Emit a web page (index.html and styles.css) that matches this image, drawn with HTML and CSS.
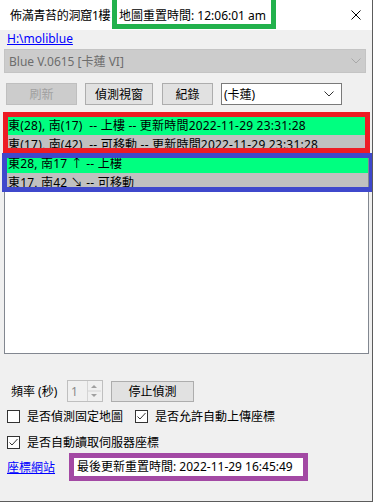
FILE: index.html
```html
<!DOCTYPE html>
<html>
<head lang="zh-Hant">
    <meta charset="UTF-8">
    <title>佈滿青苔的洞窟1樓</title>
    <link rel="stylesheet" href="styles.css">
</head>
<body>
<div class="window">
    <div class="titlebar">
        <span class="title">佈滿青苔的洞窟1樓</span>
        <span class="reset-time">地圖重置時間: 12:06:01 am</span>
        <svg class="close" width="10" height="10" viewBox="0 0 10 10">
            <path d="M0.5 0.5 L9.5 9.5 M9.5 0.5 L0.5 9.5" stroke="#000" stroke-width="1" fill="none"/>
        </svg>
    </div>
    <div class="content">
        <a class="path-link" href="#">H:\moliblue</a>
        <div class="combo combo-disabled">
            <span>Blue V.0615 [卡蓮 VI]</span>
            <svg width="10" height="6" viewBox="0 0 10 6"><path d="M0.5 0.5 L5 5 L9.5 0.5" stroke="#a8a8a8" fill="none"/></svg>
        </div>
        <div class="toolbar">
            <div class="btn btn-disabled btn-refresh">刷新</div>
            <div class="btn btn-detect">偵測視窗</div>
            <div class="btn btn-log">紀錄</div>
            <div class="combo combo-char">
                <span>(卡蓮)</span>
                <svg width="10" height="6" viewBox="0 0 10 6"><path d="M0.5 0.5 L5 5 L9.5 0.5" stroke="#333" fill="none"/></svg>
            </div>
        </div>
        <div class="listbox">
            <div class="row row-up">東(28), 南(17)  -- 上樓 -- 更新時間2022-11-29 23:31:28</div>
            <div class="row row-idle">東(17), 南(42)  -- 可移動 -- 更新時間2022-11-29 23:31:28</div>
            <div class="row row-up">東28, 南17 ↑ -- 上樓</div>
            <div class="row row-idle">東17, 南42 ↘ -- 可移動</div>
            <div class="mark mark-red"></div>
            <div class="mark mark-blue"></div>
        </div>
        <div class="freq-row">
            <span class="freq-label">頻率 (秒)</span>
            <div class="spin">
                <span class="spin-value">1</span>
                <svg class="spin-arrows" width="14" height="20" viewBox="0 0 14 20">
                    <path d="M0.5 0 V20 M0.5 10 H14" stroke="#d4d4d4" fill="none"/>
                    <path d="M4 7 L7 4 L10 7 Z" fill="#a0a0a0"/>
                    <path d="M4 13 L7 16 L10 13 Z" fill="#a0a0a0"/>
                </svg>
            </div>
            <div class="btn btn-stop">停止偵測</div>
        </div>
        <div class="check-row">
            <label class="check-item check-fixed">
                <span class="box"></span>
                <span>是否偵測固定地圖</span>
            </label>
            <label class="check-item">
                <span class="box"><svg width="11" height="11" viewBox="0 0 11 11"><path d="M1.5 5.5 L4 8 L9.5 2" stroke="#333" stroke-width="1" fill="none"/></svg></span>
                <span>是否允許自動上傳座標</span>
            </label>
        </div>
        <div class="check-row check-row-2">
            <label class="check-item">
                <span class="box"><svg width="11" height="11" viewBox="0 0 11 11"><path d="M1.5 5.5 L4 8 L9.5 2" stroke="#333" stroke-width="1" fill="none"/></svg></span>
                <span>是否自動讀取伺服器座標</span>
            </label>
        </div>
        <div class="footer">
            <a class="site-link" href="#">座標網站</a>
            <span class="last-update">最後更新重置時間: 2022-11-29 16:45:49</span>
        </div>
    </div>
</div>
</body>
</html>
```

FILE: styles.css
```css
*{
    margin: 0;
    padding: 0;
    box-sizing: border-box;
}
body{
    width: 373px;
    height: 502px;
    overflow: hidden;
    background: #2f3a26;
    font-family: "Noto Sans", "Noto Sans CJK TC", sans-serif;
    font-size: 12px;
    color: #000;
}
.window{
    width: 373px;
    height: 502px;
    background: #f0f0f0;
    border-right: 1px solid #5c5c5c;
    border-bottom: 1px solid #5c5c5c;
    overflow: hidden;
}

/* title bar */
.titlebar{
    height: 30px;
    background: #fff;
    display: flex;
    align-items: flex-start;
    padding-left: 10px;
}
.title{
    width: 102px;
    line-height: 16px;
    margin-top: 8px;
    letter-spacing: -0.3px;
    white-space: nowrap;
}
.reset-time{
    height: 29px;
    width: 164px;
    border: 5px solid #22b14c;
    border-top: 0;
    padding: 8px 0 0 2px;
    line-height: 16px;
    white-space: nowrap;
}
.close{
    margin-left: auto;
    margin-right: 11px;
    margin-top: 10px;
}

/* body */
.content{
    padding: 0 4px;
}
.path-link{
    display: block;
    width: fit-content;
    margin: 1px 0 0 3px;
    line-height: 16px;
    color: #0000ff;
}
.combo{
    display: flex;
    align-items: center;
    justify-content: space-between;
    white-space: nowrap;
}
.combo-disabled{
    margin-top: 2px;
    width: 362px;
    height: 24px;
    background: #cccccc;
    border: 1px solid #c4c4c4;
    color: #6d6d6d;
    padding: 0 4px 0 4px;
}
.toolbar{
    margin-top: 10px;
    height: 22px;
    display: flex;
    padding-left: 2px;
}
.btn{
    height: 22px;
    border: 1px solid #adadad;
    background: #e1e1e1;
    display: flex;
    align-items: center;
    justify-content: center;
}
.btn-disabled{
    background: #cccccc;
    border-color: #bfbfbf;
    color: #a0a0a0;
}
.btn-refresh{
    width: 71px;
}
.btn-detect{
    width: 68px;
    margin-left: 8px;
}
.btn-log{
    width: 51px;
    margin-left: 9px;
}
.combo-char{
    width: 121px;
    height: 22px;
    margin-left: 8px;
    background: #fff;
    border: 1px solid #7a7a7a;
    padding: 0 7px 0 2px;
}

/* list */
.listbox{
    position: relative;
    margin-top: 10px;
    width: 365px;
    height: 239px;
    border: 1px solid #828790;
    background: #fff;
}
.row{
    height: 19px;
    line-height: 20px;
    padding-left: 3px;
    letter-spacing: 0.2px;
    white-space: pre;
}
.row-up{
    background: #00ff80;
}
.row-idle{
    background: #c0c0c0;
}
.mark{
    position: absolute;
    border: 5px solid;
}
.mark-red{
    left: -2px;
    top: -4px;
    width: 367px;
    height: 41px;
    border-color: #ed1c24;
}
.mark-blue{
    left: -3px;
    top: 37px;
    width: 372px;
    height: 39px;
    border-color: #3f48cc;
}

/* bottom controls */
.freq-row{
    margin-top: 26px;
    height: 22px;
    display: flex;
    align-items: center;
}
.freq-label{
    width: 63px;
    padding-left: 7px;
    white-space: nowrap;
}
.spin{
    width: 36px;
    height: 22px;
    border: 1px solid #bfbfbf;
    display: flex;
    align-items: center;
    justify-content: space-between;
    padding-left: 3px;
    color: #8a8a8a;
}
.spin-arrows{
    margin-right: 1px;
}
.btn-stop{
    width: 83px;
    height: 21px;
    margin-left: 8px;
}
.check-row{
    margin-top: 6px;
    height: 16px;
    display: flex;
    align-items: center;
    padding-left: 3px;
}
.check-row-2{
    margin-top: 10px;
}
.check-item{
    display: flex;
    align-items: center;
    white-space: nowrap;
}
.check-fixed{
    width: 128px;
}
.box{
    width: 13px;
    height: 13px;
    border: 1px solid #333;
    background: #fff;
    margin-right: 7px;
    display: flex;
}
.footer{
    margin-top: 3px;
    height: 28px;
    display: flex;
    align-items: center;
}
.site-link{
    margin-left: 3px;
    width: 48px;
    color: #0000ff;
    white-space: nowrap;
}
.last-update{
    margin-left: 14px;
    width: 239px;
    height: 28px;
    border: 5px solid #a349a4;
    padding-left: 3px;
    line-height: 18px;
    background: #fff;
    white-space: nowrap;
}
```
